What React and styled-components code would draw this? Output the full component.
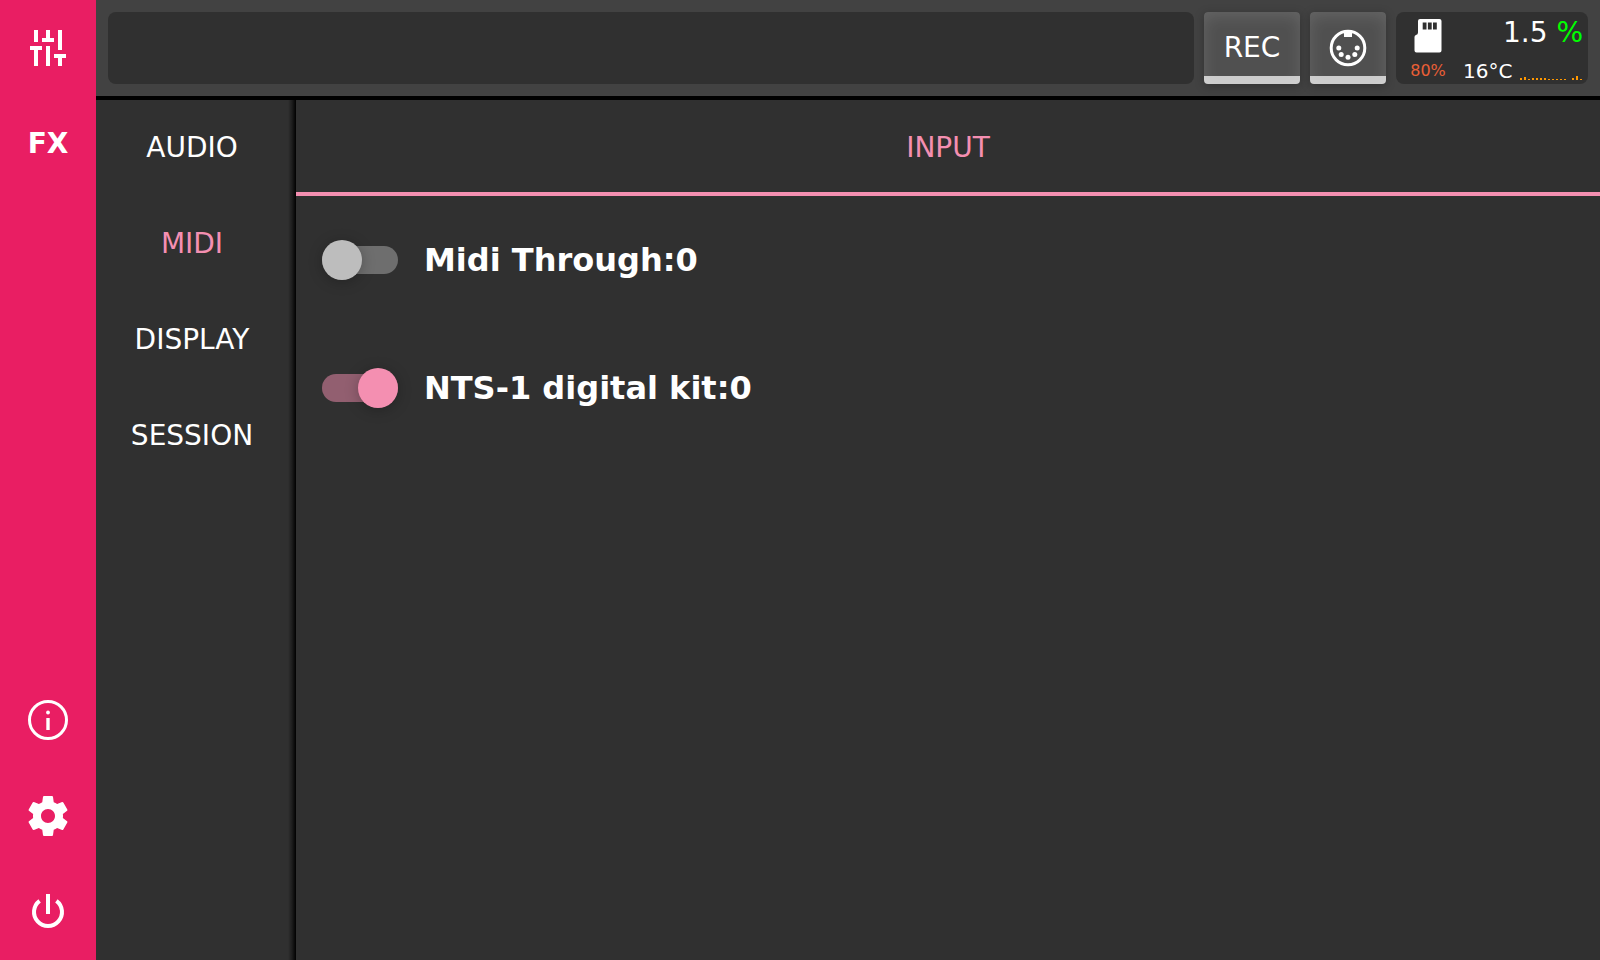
import React, { useState } from 'react'
import styled, { createGlobalStyle, ThemeProvider } from 'styled-components'

const theme = {
  primary: '#e91e63',
  accent: '#f48fb1',
  accentTrack: '#925f70',
  background: '#303030',
  toolbar: '#424242',
  text: '#ffffff',
  cell: '96px'
}

const GlobalStyle = createGlobalStyle`
  * {
    box-sizing: border-box;
  }
  body {
    margin: 0;
    background: #303030;
    color: #ffffff;
    font-family: 'DejaVu Sans', sans-serif;
    font-size: 28px;
  }
  button,
  input {
    margin: 0;
    padding: 0;
    border: 0;
    color: inherit;
    font: inherit;
    cursor: pointer;
  }
`

const Shell = styled.div`
  display: flex;
  min-height: 100vh;
`

const SideRail = styled.nav`
  display: flex;
  flex: none;
  flex-direction: column;
  width: ${props => props.theme.cell};
  background: ${props => props.theme.primary};
`

const RailButton = styled.button`
  display: flex;
  align-items: center;
  justify-content: center;
  height: ${props => props.theme.cell};
  background: transparent;
  font-weight: 700;
  line-height: 32px;
`

const RailSpacer = styled.div`
  flex: 1;
`

const Page = styled.div`
  display: flex;
  flex: 1;
  flex-direction: column;
  min-width: 0;
`

const Toolbar = styled.header`
  display: flex;
  gap: 10px;
  height: 100px;
  padding: 12px;
  background: ${props => props.theme.toolbar};
  border-bottom: 4px solid #000000;
`

const MessageBar = styled.div`
  flex: 1;
  min-width: 0;
  background: ${props => props.theme.background};
  border-radius: 8px;
`

const PadButton = styled.button`
  display: flex;
  flex: none;
  align-items: center;
  justify-content: center;
  width: ${props => (props.$wide ? '96px' : '76px')};
  background: linear-gradient(#cccccc, #cccccc) bottom / 100% 8px no-repeat
    #505050;
  border-radius: 4px;
  box-shadow: inset 0 4px 16px rgba(255, 255, 255, 0.12),
    0 2px 10px rgba(0, 0, 0, 0.25);
  line-height: 32px;
`

const StatusPanel = styled.section`
  display: grid;
  flex: none;
  grid-template-columns: 64px 1fr;
  width: 192px;
  height: 72px;
  background: ${props => props.theme.background};
  border-radius: 8px;
`

const Storage = styled.div`
  display: flex;
  flex-direction: column;
  align-items: center;
  justify-content: space-between;
  padding: 6px 0 4px;
`

const StorageLevel = styled.span`
  color: #e95f36;
  font-size: 16px;
  line-height: 18px;
`

const Load = styled.div`
  display: flex;
  flex-direction: column;
  justify-content: space-between;
  padding: 5px 5px 0 3px;
`

const LoadValue = styled.div`
  line-height: 32px;
  text-align: right;
`

const LoadUnit = styled.span`
  color: #00ff00;
`

const LoadDetails = styled.div`
  display: flex;
  align-items: flex-end;
  justify-content: space-between;
  padding-bottom: 4px;
`

const Temperature = styled.span`
  font-size: 20px;
  line-height: 18px;
`

const Body = styled.div`
  display: flex;
  flex: 1;
`

const SectionList = styled.nav`
  flex: none;
  width: 200px;
  background: linear-gradient(
      to right,
      transparent,
      rgba(0, 0, 0, 0.4) 50%,
      #000000
    )
    right / 8px 100% no-repeat;
`

const SectionButton = styled.button`
  display: block;
  width: 192px;
  height: ${props => props.theme.cell};
  background: transparent;
  color: ${props =>
    props.$active ? props.theme.accent : props.theme.text};
  line-height: 92px;
  text-align: center;
`

const Settings = styled.main`
  flex: 1;
  min-width: 0;
`

const TabBar = styled.div`
  display: flex;
`

const Tab = styled.button`
  flex: 1;
  height: ${props => props.theme.cell};
  padding-top: 2px;
  background: transparent;
  border-bottom: 4px solid ${props => props.theme.accent};
  color: ${props => props.theme.accent};
`

const DeviceRow = styled.label`
  display: flex;
  align-items: center;
  gap: 26px;
  height: 128px;
  padding: 0 26px;
  font-size: 32px;
  font-weight: 700;
  cursor: pointer;
`

const Switch = styled.input`
  position: relative;
  flex: none;
  width: 76px;
  height: 28px;
  appearance: none;
  background: #6e6e6e;
  border-radius: 14px;

  &::before {
    content: '';
    position: absolute;
    top: -6px;
    left: 0;
    width: 40px;
    height: 40px;
    background: #bdbdbd;
    border-radius: 50%;
    box-shadow: 0 2px 14px rgba(0, 0, 0, 0.25);
  }

  &:checked {
    background: ${props => props.theme.accentTrack};
  }

  &:checked::before {
    left: 36px;
    background: ${props => props.theme.accent};
  }
`

const MixerIcon = () => (
  <svg width="48" height="48" viewBox="0 0 24 24" fill="#fff">
    <path d="M5 3h2v6H5zM3 11h6v2H7v8H5v-8H3zM11 3h2v4h2v2H9V7h2zM11 11h2v10h-2zM17 3h2v10h-2zM15 15h6v2h-2v4h-2v-4h-2z" />
  </svg>
)

const InfoIcon = () => (
  <svg width="48" height="48" viewBox="0 0 48 48" fill="#fff">
    <circle cx="24" cy="24" r="18.5" fill="none" stroke="#fff" strokeWidth="3" />
    <circle cx="24" cy="16.5" r="1.9" />
    <path d="M22.3 22h3.4v12h-3.4z" />
  </svg>
)

const GearIcon = () => (
  <svg width="48" height="48" viewBox="0 0 24 24" fill="#fff">
    <path d="M19.43 12.98c.04-.32.07-.64.07-.98s-.03-.66-.07-.98l2.11-1.65c.19-.15.24-.42.12-.64l-2-3.46c-.12-.22-.39-.3-.61-.22l-2.49 1c-.52-.4-1.08-.73-1.69-.98l-.38-2.65C14.46 2.18 14.25 2 14 2h-4c-.25 0-.46.18-.49.42l-.38 2.65c-.61.25-1.17.59-1.69.98l-2.49-1c-.23-.09-.49 0-.61.22l-2 3.46c-.13.22-.07.49.12.64l2.11 1.65c-.04.32-.07.65-.07.98s.03.66.07.98l-2.11 1.65c-.19.15-.24.42-.12.64l2 3.46c.12.22.39.3.61.22l2.49-1c.52.4 1.08.73 1.69.98l.38 2.65c.03.24.24.42.49.42h4c.25 0 .46-.18.49-.42l.38-2.65c.61-.25 1.17-.59 1.69-.98l2.49 1c.23.09.49 0 .61-.22l2-3.46c.12-.22.07-.49-.12-.64l-2.11-1.65zM12 15.5c-1.93 0-3.5-1.57-3.5-3.5s1.57-3.5 3.5-3.5 3.5 1.57 3.5 3.5-1.57 3.5-3.5 3.5z" />
  </svg>
)

const PowerIcon = () => (
  <svg width="48" height="48" viewBox="0 0 48 48" fill="none" stroke="#fff" strokeWidth="4">
    <path d="M24 6v20M15.6 12.8A14 14 0 1 0 32.4 12.8" />
  </svg>
)

const MidiIcon = () => (
  <svg width="40" height="40" viewBox="0 0 40 40" fill="#fff">
    <circle cx="20" cy="20" r="16.8" fill="none" stroke="#fff" strokeWidth="3" />
    <path d="M16 3h8v6h-8z" />
    <circle cx="10.8" cy="20" r="2.5" />
    <circle cx="13.2" cy="26.6" r="2.5" />
    <circle cx="20" cy="29.2" r="2.5" />
    <circle cx="26.8" cy="26.6" r="2.5" />
    <circle cx="29.2" cy="20" r="2.5" />
  </svg>
)

const SdCardIcon = () => (
  <svg width="28" height="36" viewBox="0 0 28 36">
    <path
      d="M6 1h19.5a2 2 0 0 1 2 2v29.5a2 2 0 0 1-2 2H2.5a2 2 0 0 1-2-2V19q0-1.500 1.500-2 2-.5 2-2.500V3a2 2 0 0 1 2-2z"
      fill="#fff"
    />
    <path d="M8.7 4.500h3.800v7H8.700zM13.900 4.500h3.800v7h-3.800zM19 4.500h3.800v7H19z" fill="#303030" />
  </svg>
)

const history = [2, 3, 1, 2, 2, 2, 2, 1, 1, 1, 1, 1, 0, 2, 4, 1]

const LoadGraph = () => (
  <svg width="63" height="16" viewBox="0 0 63 16" fill="#ff9800" shapeRendering="crispEdges">
    {history.map((value, i) => (
      <rect key={i} x={i * 4} y={16 - value} width="2" height={value} />
    ))}
  </svg>
)

const sections = ['AUDIO', 'MIDI', 'DISPLAY', 'SESSION']

const App = () => {
  const [section, setSection] = useState('MIDI')
  const [devices, setDevices] = useState([
    { name: 'Midi Through:0', enabled: false },
    { name: 'NTS-1 digital kit:0', enabled: true }
  ])

  const toggle = name =>
    setDevices(
      devices.map(d => (d.name === name ? { ...d, enabled: !d.enabled } : d))
    )

  return (
    <ThemeProvider theme={theme}>
      <GlobalStyle />
      <Shell>
        <SideRail>
          <RailButton aria-label="Mixer">
            <MixerIcon />
          </RailButton>
          <RailButton>FX</RailButton>
          <RailSpacer />
          <RailButton aria-label="Info">
            <InfoIcon />
          </RailButton>
          <RailButton aria-label="Settings">
            <GearIcon />
          </RailButton>
          <RailButton aria-label="Power">
            <PowerIcon />
          </RailButton>
        </SideRail>
        <Page>
          <Toolbar>
            <MessageBar />
            <PadButton $wide>REC</PadButton>
            <PadButton aria-label="MIDI">
              <MidiIcon />
            </PadButton>
            <StatusPanel>
              <Storage>
                <SdCardIcon />
                <StorageLevel>80%</StorageLevel>
              </Storage>
              <Load>
                <LoadValue>
                  1.5 <LoadUnit>%</LoadUnit>
                </LoadValue>
                <LoadDetails>
                  <Temperature>16°C</Temperature>
                  <LoadGraph />
                </LoadDetails>
              </Load>
            </StatusPanel>
          </Toolbar>
          <Body>
            <SectionList>
              {sections.map(name => (
                <SectionButton
                  key={name}
                  $active={name === section}
                  onClick={() => setSection(name)}
                >
                  {name}
                </SectionButton>
              ))}
            </SectionList>
            <Settings>
              <TabBar>
                <Tab>INPUT</Tab>
              </TabBar>
              {devices.map(device => (
                <DeviceRow key={device.name}>
                  <Switch
                    type="checkbox"
                    checked={device.enabled}
                    onChange={() => toggle(device.name)}
                  />
                  {device.name}
                </DeviceRow>
              ))}
            </Settings>
          </Body>
        </Page>
      </Shell>
    </ThemeProvider>
  )
}

export default App
